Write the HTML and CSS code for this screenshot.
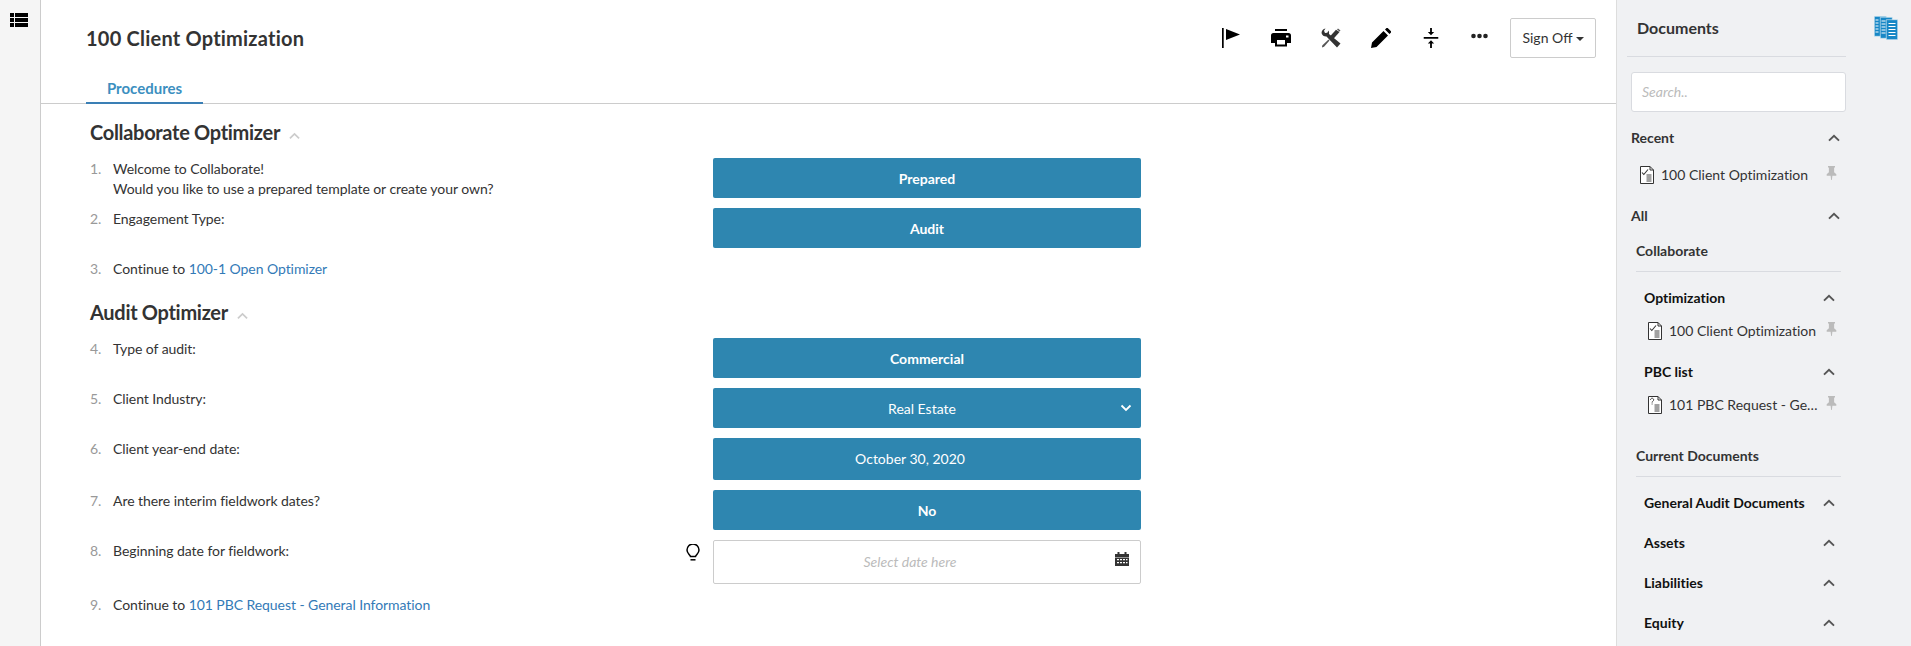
FILE: index.html
```html
<!DOCTYPE html>
<html lang="en">
<head>
<meta charset="utf-8">
<title>100 Client Optimization</title>
<link rel="stylesheet" href="styles.css">
</head>
<body>
<svg class="defs" width="0" height="0" aria-hidden="true">
  <symbol id="chev" viewBox="0 0 12 8"><path d="M1 6.6 6 1.800l5 4.800" fill="none" stroke="currentColor" stroke-width="1.900"/></symbol>
  <symbol id="pin" viewBox="0 0 12 16"><path d="M2 0h8v1.500L9 2v5l2.500 2.500V11H7l-.6 5h-.8L5 11H.5V9.500L3 7V2l-1-.5z" fill="currentColor"/></symbol>
  <symbol id="doccheck" viewBox="0 0 14 18"><path d="M.5.5h9.500l3.500 3.500v13.500H.5z" fill="#fff" stroke="#333"/><path d="M10 .5V4h3.500" fill="none" stroke="#333"/><path d="M2 6.500l1.800 2L8 3.500" fill="none" stroke="#333" stroke-width="1.100"/><path d="M6.500 9h5M6.500 11h5M6.500 13h5M6.500 15h5" stroke="#444"/></symbol>
  <symbol id="docq" viewBox="0 0 14 18"><path d="M.5.5h9.500l3.500 3.500v13.500H.5z" fill="#fff" stroke="#333"/><path d="M10 .5V4h3.500" fill="none" stroke="#333"/><path d="M2.500 3.800a1.600 1.600 0 1 1 2.400 1.400c-.6.4-.8.700-.8 1.400M4.100 7.500v1" fill="none" stroke="#333" stroke-width=".9"/><path d="M6.500 9h5M6.500 11h5M6.500 13h5M6.500 15h5" stroke="#444"/></symbol>
</svg>

<aside class="rail">
  <svg class="rail-icon" viewBox="0 0 18 14"><path d="M0 0h4v4H0zM5 0h13v4H5zM0 5h4v4H0zM5 5h13v4H5zM0 10h4v4H0zM5 10h13v4H5z" fill="#000"/></svg>
</aside>

<main class="main">
  <header class="topbar">
    <h1 class="title">100 Client Optimization</h1>
    <div class="tools">
      <svg class="tool" viewBox="0 0 20 20"><path d="M1 0h1.700v20H1zM5 1l14 5.500L5 12z" fill="#000"/></svg>
      <svg class="tool" viewBox="0 0 20 20"><path d="M4 1h12v2H4zM2.500 5h15A2.500 2.500 0 0 1 20 7.500V15h-4v3.500H4V15H0V7.500A2.500 2.500 0 0 1 2.500 5zM6 12v4.500h8V12zM15 7.500v2h2.500v-2z" fill="#000" fill-rule="evenodd"/></svg>
      <svg class="tool" viewBox="0 0 20 20"><path d="M.5 5a5 5 0 0 1 4-4.500L3 2.800l1 2.300 2.300-.3L7.500 2.500A5 5 0 0 1 8 6L19.500 15.500 16 19.500 5.500 8.500A5 5 0 0 1 .5 5z" fill="#333"/><path d="M15 1.800 18.500 4 10.500 13 7.500 10z" fill="#333"/><path d="M7.500 11.500 8.500 12.500 3 18.800 1 19.500 1.200 17.500z" fill="#555"/><path d="M17 .5l2.500 2-1 1L16 1.500z" fill="#555"/></svg>
      <svg class="tool" viewBox="0 0 20 20"><path d="M0 20l1-5.500L12.500 3l4.500 4.500L5.500 19zM14 1.500 15.500 0a1 1 0 0 1 1.200 0l3.300 3.300a1 1 0 0 1 0 1.200L18.500 6z" fill="#000"/></svg>
      <svg class="tool" viewBox="0 0 16 22"><path d="M0 10h16v1.700H0zM7 0h2v4.500h2.500L8 8 4.500 4.500H7zM8 13.500l3.500 3.500H9v5H7v-5H4.500z" fill="#000"/></svg>
      <svg class="dots" viewBox="0 0 17 6"><circle cx="2.500" cy="3" r="2.300" fill="#222"/><circle cx="8.500" cy="3" r="2.300" fill="#222"/><circle cx="14.500" cy="3" r="2.300" fill="#222"/></svg>
      <button class="signoff" type="button">Sign Off<span class="caret"></span></button>
    </div>
  </header>
  <nav class="tabs"><a class="tab">Procedures</a></nav>

  <section class="content">
    <h2 class="section">Collaborate Optimizer <svg class="section-chev"><use href="#chev"/></svg></h2>
    <div class="row">
      <span class="num">1.</span>
      <div class="label">Welcome to Collaborate!<br>Would you like to use a prepared template or create your own?</div>
      <div class="ctrl"><button class="answer strong" type="button">Prepared</button></div>
    </div>
    <div class="row">
      <span class="num">2.</span>
      <div class="label">Engagement Type:</div>
      <div class="ctrl"><button class="answer strong" type="button">Audit</button></div>
    </div>
    <div class="row row-link">
      <span class="num">3.</span>
      <div class="label">Continue to <a class="link">100-1 Open Optimizer</a></div>
    </div>

    <h2 class="section section-b">Audit Optimizer <svg class="section-chev"><use href="#chev"/></svg></h2>
    <div class="row">
      <span class="num">4.</span>
      <div class="label">Type of audit:</div>
      <div class="ctrl"><button class="answer strong" type="button">Commercial</button></div>
    </div>
    <div class="row">
      <span class="num">5.</span>
      <div class="label">Client Industry:</div>
      <div class="ctrl"><button class="answer select" type="button">Real Estate<svg class="select-chev" viewBox="0 0 12 8"><path d="M1.500 1.500 6 6l4.500-4.500" fill="none" stroke="#fff" stroke-width="1.800"/></svg></button></div>
    </div>
    <div class="row">
      <span class="num">6.</span>
      <div class="label">Client year-end date:</div>
      <div class="ctrl"><button class="answer tall" type="button">October 30, 2020</button></div>
    </div>
    <div class="row">
      <span class="num">7.</span>
      <div class="label">Are there interim fieldwork dates?</div>
      <div class="ctrl"><button class="answer strong" type="button">No</button></div>
    </div>
    <div class="row">
      <span class="num">8.</span>
      <div class="label">Beginning date for fieldwork:</div>
      <div class="ctrl">
        <svg class="bulb" viewBox="0 0 14 18"><path d="M4.500 12.500C4 10.500 1 9.500 1 6a6 6 0 0 1 12 0c0 3.500-3 4.500-3.500 6.500z" fill="none" stroke="#000" stroke-width="1.500"/><path d="M4.500 15.800h5" stroke="#000" stroke-width="1.500"/></svg>
        <div class="datefield">Select date here
          <svg class="cal" viewBox="0 0 14 14"><path d="M0 2h2.500V0h2v2h5V0h2v2H14v3H0z" fill="#333"/><path d="M0 5.500h14V14H0zM2 7v1.200h2V7zm3 0v1.200h2V7zm3 0v1.200h2V7zm3 0v1.200h1.500V7zM2 10v1.200h2V10zm3 0v1.200h2V10zm3 0v1.200h2V10zm3 0v1.200h1.500V10z" fill="#333" fill-rule="evenodd"/></svg>
        </div>
      </div>
    </div>
    <div class="row row-link">
      <span class="num">9.</span>
      <div class="label">Continue to <a class="link">101 PBC Request - General Information</a></div>
    </div>
  </section>
</main>

<aside class="side">
  <div class="side-panel">
    <h3 class="side-title">Documents</h3>
    <div class="search">Search..</div>

    <div class="group group-recent"><span>Recent</span><svg class="chev"><use href="#chev"/></svg></div>
    <div class="doc doc-recent">
      <svg class="docicon"><use href="#doccheck"/></svg><span class="docname">100 Client Optimization</span><svg class="pin"><use href="#pin"/></svg>
    </div>
    <div class="group group-all"><span>All</span><svg class="chev"><use href="#chev"/></svg></div>

    <div class="nest">
      <h4 class="nest-title">Collaborate</h4>
      <div class="sub"><span>Optimization</span><svg class="chev"><use href="#chev"/></svg></div>
      <div class="doc doc-sub">
        <svg class="docicon"><use href="#doccheck"/></svg><span class="docname">100 Client Optimization</span><svg class="pin"><use href="#pin"/></svg>
      </div>
      <div class="sub"><span>PBC list</span><svg class="chev"><use href="#chev"/></svg></div>
      <div class="doc doc-sub">
        <svg class="docicon"><use href="#docq"/></svg><span class="docname">101 PBC Request - Ge…</span><svg class="pin"><use href="#pin"/></svg>
      </div>

      <h4 class="nest-title nest-current">Current Documents</h4>
      <div class="sub"><span>General Audit Documents</span><svg class="chev"><use href="#chev"/></svg></div>
      <div class="sub"><span>Assets</span><svg class="chev"><use href="#chev"/></svg></div>
      <div class="sub"><span>Liabilities</span><svg class="chev"><use href="#chev"/></svg></div>
      <div class="sub"><span>Equity</span><svg class="chev"><use href="#chev"/></svg></div>
    </div>
  </div>
  <div class="side-strip">
    <svg class="books" viewBox="0 0 24 24">
      <g fill="#1787c6" stroke="#e4f0f7" stroke-width=".6">
        <path d="M.3.300h12v20h-12z"/>
        <path d="M6.300 1.300h12v21h-12z"/>
        <path d="M12.300 3.700h11.400v20H12.300z"/>
      </g>
      <path d="M1.500 4h3M1.500 7h3M1.500 10h3M1.500 13h3M1.500 16h3M7.500 5h4M7.500 8h4M7.500 11h4M7.500 14h4M7.500 17h4M14.500 7.500h7M14.500 10.500h7M14.500 13.500h7M14.500 16.500h7M14.500 19.500h7" stroke="#fff"/>
    </svg>
  </div>
</aside>
</body>
</html>
```
FILE: styles.css
```css
* { box-sizing: border-box; }
html, body { height: 100%; }
body {
  margin: 0;
  display: flex;
  height: 646px;
  overflow: hidden;
  font-family: Lato, "Open Sans", sans-serif;
  font-size: 14px;
  line-height: 20px;
  font-variant-ligatures: none;
  color: #333;
  background: #fff;
}
.defs { position: absolute; }

.rail {
  flex: 0 0 41px;
  background: #f5f5f5;
  border-right: 1px solid #ccc;
  padding: 13px 0 0 10px;
}
.rail-icon { display: block; width: 18px; height: 14px; }

.main { flex: 1 1 auto; min-width: 0; }
.topbar {
  display: flex;
  justify-content: space-between;
  align-items: flex-start;
  height: 74px;
  padding: 18px 20px 0 45px;
}
.title { margin: 7px 0 0; font-size: 20px; line-height: 26px; font-weight: 700; letter-spacing: .22px; color: #333; }
.tools { display: flex; align-items: flex-start; }
.tool { width: 20px; height: 20px; margin: 10px 30px 0 0; flex: none; }
.dots { width: 17px; height: 6px; margin: 15px 22px 0 0; flex: none; }
.signoff {
  width: 86px;
  height: 40px;
  padding: 0;
  border: 1px solid #ccc;
  border-radius: 2px;
  background: #fff;
  font: 14px/20px Lato, sans-serif;
  color: #333;
}
.caret {
  display: inline-block;
  margin-left: 3px;
  vertical-align: 2px;
  border-top: 4px solid #333;
  border-left: 4px solid transparent;
  border-right: 4px solid transparent;
}

.tabs { height: 30px; border-bottom: 1px solid #ccc; padding-left: 45px; }
.tab {
  display: block;
  width: 117px;
  height: 30px;
  border-bottom: 2px solid #3a7fb5;
  text-align: center;
  font-size: 15px;
  font-weight: 700;
  line-height: 29px;
  color: #3c8fc0;
}

.content { padding: 14px 0 0 49px; }
.section {
  margin: 0 0 12px;
  font-size: 20px;
  line-height: 28px;
  font-weight: 700;
  letter-spacing: -.3px;
  color: #333;
}
.section-b { margin: 19px 0 12px; }
.section-chev { width: 11px; height: 8px; margin-left: 5px; color: #ccc; }

.row { display: flex; align-items: flex-start; margin-bottom: 10px; }
.num { flex: 0 0 23px; color: #999; padding-top: 1px; }
.label { flex: 0 0 600px; padding-top: 1px; margin-bottom: -1px; letter-spacing: -.06px; }
.ctrl { position: relative; width: 428px; }
.row-link { margin-bottom: 0; }

.answer {
  position: relative;
  display: block;
  width: 100%;
  height: 40px;
  padding: 0;
  border: 0;
  border-radius: 2px;
  background: #2e86b0;
  color: #fff;
  font: 14px/20px Lato, sans-serif;
}
.strong { font-weight: 700; padding-top: 2px; }
.select { padding: 2px 10px 0 0; }
.tall { height: 42px; padding-right: 34px; }
.select-chev { position: absolute; right: 9px; top: 16px; width: 12px; height: 8px; }

.link { color: #337ab7; }

.bulb { position: absolute; left: -27px; top: 4px; width: 14px; height: 18px; }
.datefield {
  position: relative;
  height: 44px;
  padding-right: 34px;
  border: 1px solid #ccc;
  border-radius: 2px;
  text-align: center;
  line-height: 42px;
  font-style: italic;
  color: #bbb;
}
.cal { position: absolute; right: 11px; top: 11px; width: 14px; height: 14px; }

.side {
  flex: 0 0 295px;
  display: flex;
  background: #f0f1f3;
  border-left: 1px solid #ddd;
}
.side-panel { flex: 0 0 229px; padding: 0 0 0 14px; }
.side-strip { flex: 1 1 auto; padding: 16px 0 0 28px; }
.books { display: block; width: 24px; height: 24px; }

.side-title {
  margin: 0 0 15px -4px;
  height: 57px;
  padding: 18px 0 0 10px;
  border-bottom: 1px solid #d9dbe0;
  font-size: 16px;
  line-height: 20px;
  font-weight: 700;
  color: #333;
}
.search {
  height: 40px;
  border: 1px solid #d9dbe0;
  border-radius: 3px;
  background: #fff;
  padding: 0 10px;
  line-height: 38px;
  font-style: italic;
  color: #bbb;
}
.group {
  display: flex;
  justify-content: space-between;
  align-items: center;
  height: 20px;
  padding-right: 6px;
  font-weight: 700;
  color: #333;
}
.group-recent { margin-top: 16px; }
.group-all { margin-top: 21px; }
.chev { width: 12px; height: 8px; color: #555; flex: none; }
.doc { display: flex; align-items: center; height: 20px; color: #333; }
.doc-recent { margin: 17px 9px 0 9px; }
.doc-sub { margin: 13px 0 0 12px; padding-right: 4px; }
.docicon { width: 14px; height: 18px; flex: none; margin-right: 8px; }
.docname { flex: 1 1 auto; white-space: nowrap; margin-left: -1px; }
.pin { width: 11px; height: 14px; color: #bbb; flex: none; margin-top: -4px; }

.nest { padding: 0 5px 0 5px; }
.nest-title {
  margin: 15px 0 0;
  height: 31px;
  border-bottom: 1px solid #d9dbe0;
  font-size: 14px;
  line-height: 20px;
  font-weight: 700;
  color: #333;
}
.nest-current { margin-top: 31px; }
.sub {
  display: flex;
  justify-content: space-between;
  align-items: center;
  height: 20px;
  margin-top: 20px;
  padding: 0 6px 0 8px;
  font-weight: 700;
  color: #111;
}
.nest-title + .sub { margin-top: 16px; }
.doc-sub + .sub { margin-top: 21px; }
```
